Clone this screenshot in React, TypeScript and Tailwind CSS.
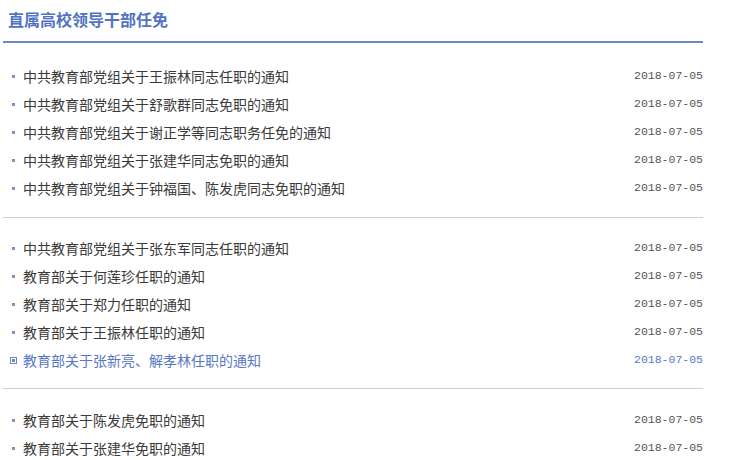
import React from 'react'

type Item = { title: string; date: string; active?: boolean }

const groups: Item[][] = [
  [
    { title: '中共教育部党组关于王振林同志任职的通知', date: '2018-07-05' },
    { title: '中共教育部党组关于舒歌群同志免职的通知', date: '2018-07-05' },
    { title: '中共教育部党组关于谢正学等同志职务任免的通知', date: '2018-07-05' },
    { title: '中共教育部党组关于张建华同志免职的通知', date: '2018-07-05' },
    { title: '中共教育部党组关于钟福国、陈发虎同志免职的通知', date: '2018-07-05' },
  ],
  [
    { title: '中共教育部党组关于张东军同志任职的通知', date: '2018-07-05' },
    { title: '教育部关于何莲珍任职的通知', date: '2018-07-05' },
    { title: '教育部关于郑力任职的通知', date: '2018-07-05' },
    { title: '教育部关于王振林任职的通知', date: '2018-07-05' },
    { title: '教育部关于张新亮、解孝林任职的通知', date: '2018-07-05', active: true },
  ],
  [
    { title: '教育部关于陈发虎免职的通知', date: '2018-07-05' },
    { title: '教育部关于张建华免职的通知', date: '2018-07-05' },
  ],
]

const Row: React.FC<{ item: Item }> = ({ item }) => (
  <li className="flex items-center h-[28px]">
    <span className="w-[20px] flex items-center justify-center shrink-0">
      {item.active ? (
        <span className="w-[7px] h-[7px] border border-[#6f87c6] flex items-center justify-center">
          <span className="w-[3px] h-[3px] bg-[#6f87c6]" />
        </span>
      ) : (
        <span className="w-[3px] h-[3px] bg-[#8492bd]" />
      )}
    </span>
    <span
      className={`flex-1 text-[14px] leading-[28px] ${item.active ? 'text-[#5878c6]' : 'text-[#3a3a3a]'}`}
    >
      {item.title}
    </span>
    <span
      className={`font-['Liberation_Mono',monospace] text-[11.5px] ${item.active ? 'text-[#5878c6]' : 'text-[#555]'}`}
    >
      {item.date}
    </span>
  </li>
)

export default function App() {
  return (
    <div className="bg-white w-[729px] h-[460px] overflow-hidden font-['Noto_Sans_CJK_SC',sans-serif]">
      <div className="ml-[3px] w-[700px]">
        {/* Header */}
        <div className="h-[43px] border-b-2 border-[#6d86c5] flex items-start">
          <h2 className="pl-[5px] pt-[7px] text-[16px] leading-[24px] font-bold text-[#5273c4]">
            直属高校领导干部任免
          </h2>
        </div>

        {groups.map((group, gi) => (
          <div key={gi}>
            {gi > 0 && <div className="h-px bg-[#cfcfcf]" />}
            <ul
              className={
                gi === 0 ? 'pt-[19px] pb-[15px]' : gi === 1 ? 'pt-[16px] pb-[14px]' : 'pt-[17px]'
              }
            >
              {group.map((item, i) => (
                <Row key={i} item={item} />
              ))}
            </ul>
          </div>
        ))}
      </div>
    </div>
  )
}
